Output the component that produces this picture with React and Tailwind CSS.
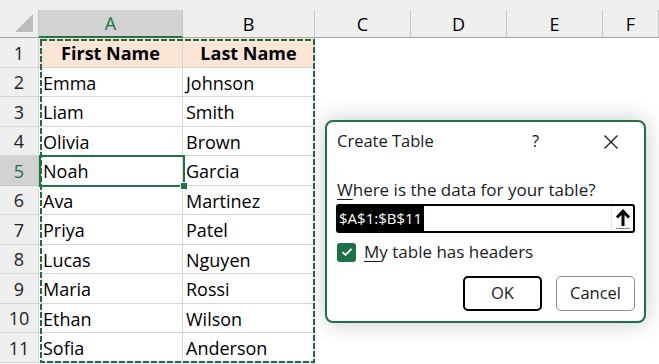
import React from 'react'

const COLS = [
  { l: 'A', w: 144 },
  { l: 'B', w: 132 },
  { l: 'C', w: 96 },
  { l: 'D', w: 96 },
  { l: 'E', w: 96 },
  { l: 'F', w: 56 },
]

const PEOPLE = [
  ['Emma', 'Johnson'],
  ['Liam', 'Smith'],
  ['Olivia', 'Brown'],
  ['Noah', 'Garcia'],
  ['Ava', 'Martinez'],
  ['Priya', 'Patel'],
  ['Lucas', 'Nguyen'],
  ['Maria', 'Rossi'],
  ['Ethan', 'Wilson'],
  ['Sofia', 'Anderson'],
]

function RowHead({ n, active }) {
  return (
    <div
      className={
        'w-[39px] shrink-0 flex items-center justify-center pt-[2px] border-b border-r text-[18px] ' +
        (active
          ? 'bg-[#d2d2d2] text-[#217346] border-[#c4c4c4]'
          : 'bg-[#efefef] text-[#222] border-[#d6d6d6]')
      }
    >
      {n}
    </div>
  )
}

function CreateTableDialog() {
  return (
    <div className="absolute left-[325px] top-[120px] w-[321px] h-[203px] bg-white border-2 border-[#1e7145] rounded-[8px] shadow-[0_0_22px_rgba(0,0,0,0.22)] pl-[10px] pr-[8px] flex flex-col text-[#1b1b1b]">
      {/* title bar */}
      <div className="h-[39px] flex items-center">
        <div className="flex-1 text-[16.5px]">Create Table</div>
        <div className="text-[16.5px] mr-[64px]">?</div>
        <svg width="16" height="16" viewBox="0 0 16 16" className="mr-[17px]">
          <path d="M1.5 1.5 L14.5 14.5 M14.5 1.5 L1.5 14.5" stroke="#1b1b1b" strokeWidth="1.3" fill="none" />
        </svg>
      </div>

      <div className="mt-[17px] h-[24px] flex items-center text-[17px]">
        <span className="underline underline-offset-[3px]">W</span>here is the data for your table?
      </div>

      {/* range box */}
      <div className="mt-[2px] w-[299px] h-[29px] border-2 border-black rounded-[3px] flex items-stretch -ml-[1px]">
        <div className="flex-1 flex items-stretch">
          <span className="bg-black text-white text-[15px] leading-none flex items-center pl-[1px] pr-[2px]">$A$1:$B$11</span>
        </div>
        <div className="w-[22px] border-l border-[#e2e2e2] flex items-center justify-center">
          <svg width="16" height="21" viewBox="0 0 16 21">
            <path d="M8 18 V3.5 M2 9.5 L8 3.2 L14 9.5" stroke="#000" strokeWidth="3" fill="none" />
            <path d="M1 20.5 H15" stroke="#8a8a8a" strokeWidth="1" />
          </svg>
        </div>
      </div>

      <div className="mt-[9px] flex items-center gap-[8px] h-[20px]">
        <div className="w-[19px] h-[19px] rounded-[3px] bg-[#1e7145] flex items-center justify-center">
          <svg width="12" height="10" viewBox="0 0 12 10">
            <path d="M1.5 5.2 L4.5 8 L10.5 1.8" stroke="#fff" strokeWidth="1.8" fill="none" />
          </svg>
        </div>
        <div className="text-[17px]">
          <span className="underline underline-offset-[3px]">M</span>y table has headers
        </div>
      </div>

      <div className="mt-[14px] flex justify-end gap-[14px] pr-[1px]">
        <button className="w-[79px] h-[35px] border-2 border-black rounded-[5px] bg-white text-[16.5px] text-[#1b1b1b]">
          OK
        </button>
        <button className="w-[79px] h-[35px] border border-[#8d8d8d] rounded-[5px] bg-white text-[16.5px] text-[#1b1b1b]">
          Cancel
        </button>
      </div>
    </div>
  )
}

export default function App() {
  return (
    <div className="relative w-[659px] h-[364px] overflow-hidden bg-white font-['Open_Sans',sans-serif] text-black">
      <div className="h-[10px] bg-[#efefef]" />

      {/* column headers */}
      <div className="h-[28px] flex bg-[#efefef] border-b border-[#a6a6a6]">
        <div className="w-[39px] shrink-0 border-r border-[#c6c6c6] flex items-end justify-end p-[5px]">
          <svg width="18" height="18" viewBox="0 0 18 18">
            <polygon points="18,0 18,18 0,18" fill="#bcbcbc" />
          </svg>
        </div>
        {COLS.map((c) => (
          <div
            key={c.l}
            style={{ width: c.w }}
            className={
              'shrink-0 flex items-center justify-center pt-[1px] text-[18px] border-r ' +
              (c.l === 'A'
                ? 'bg-[#d2d2d2] text-[#217346] border-[#c6c6c6] border-b-2 border-b-[#217346] -mb-[1px]'
                : 'border-[#c6c6c6]')
            }
          >
            {c.l}
          </div>
        ))}
      </div>

      {/* row 1 */}
      <div className="h-[29.5px] flex">
        <RowHead n={1} />
        <div className="w-[144px] shrink-0 bg-[#fce4d6] border-r border-b border-[#d4d4d4] flex items-center justify-center pt-[2px] text-[18px] font-bold">
          First Name
        </div>
        <div className="w-[132px] shrink-0 bg-[#fce4d6] border-r border-b border-[#d4d4d4] flex items-center justify-center pt-[2px] text-[18px] font-bold">
          Last Name
        </div>
      </div>

      {PEOPLE.map(([first, last], i) => (
        <div key={first} className="h-[29.5px] flex">
          <RowHead n={i + 2} active={i + 2 === 5} />
          <div className="w-[144px] shrink-0 border-r border-b border-[#d4d4d4] flex items-center pl-[4px] pt-[3px] text-[18px]">
            {first}
          </div>
          <div className="w-[132px] shrink-0 border-r border-b border-[#d4d4d4] flex items-center pl-[3px] pt-[3px] text-[18px]">
            {last}
          </div>
        </div>
      ))}

      {/* copy marquee around A1:B11 */}
      <svg className="absolute left-[40px] top-[39px]" width="275" height="324">
        <rect x="1" y="1" width="273" height="322" fill="none" stroke="#1d6b40" strokeWidth="2" strokeDasharray="6 2" />
      </svg>

      {/* active cell A5 */}
      <div className="absolute left-[39px] top-[155px] w-[146px] h-[32px] border-2 border-[#217346]" />
      <div className="absolute left-[180px] top-[182px] w-[8px] h-[8px] bg-[#217346] border border-white" />

      <CreateTableDialog />
    </div>
  )
}
